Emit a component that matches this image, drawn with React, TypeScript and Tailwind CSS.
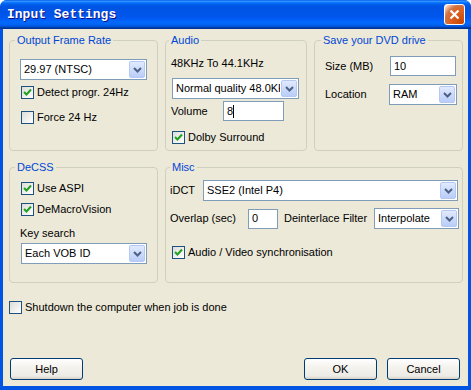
import React from 'react';

const Check: React.FC<{ checked?: boolean }> = ({ checked }) => (
  <span className="w-[13px] h-[13px] shrink-0 border border-[#1c5180] bg-[linear-gradient(135deg,#dcdcd7,#ffffff)] flex items-center justify-center">
    {checked && (
      <svg width="11" height="11" viewBox="0 0 11 11">
        <path d="M2 5 L4.5 7.5 L9 2.5" stroke="#21a121" strokeWidth="2" fill="none" />
      </svg>
    )}
  </span>
);

const CheckRow: React.FC<{ checked?: boolean; label: string; className?: string }> = ({ checked, label, className = '' }) => (
  <div className={`flex items-center gap-[3px] h-[13px] ${className}`}>
    <Check checked={checked} />
    <span className="leading-[13px] whitespace-nowrap">{label}</span>
  </div>
);

const Combo: React.FC<{ value: string; className?: string }> = ({ value, className = '' }) => (
  <div className={`h-[21px] flex items-center border border-[#7f9db9] bg-white ${className}`}>
    <span className="flex-1 pl-[3px] overflow-hidden whitespace-nowrap leading-[13px]">{value}</span>
    <span className="w-[16px] h-[17px] m-px shrink-0 rounded-[2px] border border-[#b5c8f4] bg-[linear-gradient(180deg,#e1eafe,#b9cdf8)] flex items-center justify-center">
      <svg width="9" height="6" viewBox="0 0 9 6">
        <path d="M1 1 L4.5 4.5 L8 1" stroke="#4d6185" strokeWidth="2" fill="none" />
      </svg>
    </span>
  </div>
);

const Edit: React.FC<{ value: string; caret?: boolean; className?: string }> = ({ value, caret, className = '' }) => (
  <div className={`h-[20px] flex items-center border border-[#7f9db9] bg-white pl-[3px] ${className}`}>
    <span className="leading-[13px]">{value}</span>
    {caret && <span className="w-px h-[13px] bg-black" />}
  </div>
);

const Group: React.FC<{ title: string; offset: string; className?: string; children: React.ReactNode }> = ({ title, offset, className = '', children }) => (
  <fieldset className={`border border-[#d0d0bf] rounded-[4px] p-0 m-0 min-w-0 ${className}`}>
    <legend className={`px-[2px] leading-[13px] text-[#0046d5] ${offset}`}>{title}</legend>
    {children}
  </fieldset>
);

const XpButton: React.FC<{ label: string }> = ({ label }) => (
  <button className="w-[73px] h-[22px] rounded-[3px] border border-[#003c74] bg-[linear-gradient(180deg,#ffffff_0%,#f4f3ee_40%,#ecebe6_85%,#d6d0c5_100%)] text-[11px] leading-[13px] text-black">
    {label}
  </button>
);

export default function App() {
  return (
    <div className="w-[471px] h-[390px] flex flex-col bg-[#0054e3] rounded-t-[7px] overflow-hidden font-['Liberation_Sans',Arial,sans-serif] text-[11px] text-black">
      {/* title bar */}
      <div className="h-[29px] shrink-0 flex items-center pl-[7px] pr-[6px] bg-[linear-gradient(180deg,#0058ee_0%,#3593ff_4%,#288eff_6%,#127dff_8%,#036ffc_10%,#0262ee_14%,#0057e5_20%,#0054e3_24%,#0055eb_56%,#005bf5_66%,#026afe_76%,#0062ef_86%,#0052d6_92%,#0040ab_94%,#003092_100%)]">
        <span className="flex-1 font-['Liberation_Mono',monospace] font-bold text-[13px] text-white [text-shadow:1px_1px_#0f1089]">
          Input Settings
        </span>
        <span className="w-[21px] h-[21px] rounded-[3px] border border-white bg-[radial-gradient(circle_at_90%_90%,#cc4600_0%,#dc6527_55%,#cd7546_70%,#ffccb2_90%,#ffffff_100%)] flex items-center justify-center">
          <svg width="11" height="11" viewBox="0 0 11 11">
            <path d="M1.5 1.5 L9.5 9.5 M9.5 1.5 L1.5 9.5" stroke="#fff" strokeWidth="2.2" />
          </svg>
        </span>
      </div>

      {/* client area */}
      <div className="flex-1 mx-[3px] mb-[4px] bg-[#ece9d8] flex flex-col pl-[6px] pr-[5px] pt-[5px] pb-[6px]">
        <div className="flex gap-[7px] h-[117px]">
          <Group title="Output Frame Rate" offset="ml-[5px]" className="w-[149px]">
            <div className="px-[10px] pt-[12px]">
              <Combo value="29.97 (NTSC)" />
              <CheckRow checked label="Detect progr. 24Hz" className="mt-[6px] ml-px" />
              <CheckRow label="Force 24 Hz" className="mt-[12px] ml-px" />
            </div>
          </Group>

          <Group title="Audio" offset="ml-[3px]" className="w-[142px]">
            <div className="pl-[5px] pt-[10px]">
              <div className="leading-[13px]">48KHz To 44.1KHz</div>
              <Combo value="Normal quality 48.0KHz" className="mt-[8px] ml-px w-[127px]" />
              <div className="mt-[2px] flex items-center h-[20px]">
                <span className="w-[52px]">Volume</span>
                <Edit value="8" caret className="w-[61px]" />
              </div>
              <CheckRow checked label="Dolby Surround" className="mt-[10px] ml-px" />
            </div>
          </Group>

          <Group title="Save your DVD drive" offset="ml-[6px]" className="w-[149px]">
            <div className="pl-[10px] pt-[9px]">
              <div className="flex items-center h-[20px]">
                <span className="w-[65px]">Size (MB)</span>
                <Edit value="10" className="w-[66px]" />
              </div>
              <div className="mt-[8px] flex items-center h-[21px]">
                <span className="w-[64px]">Location</span>
                <Combo value="RAM" className="w-[68px]" />
              </div>
            </div>
          </Group>
        </div>

        <div className="flex gap-[7px] h-[122px] mt-[10px]">
          <Group title="DeCSS" offset="ml-[5px]" className="w-[149px]">
            <div className="px-[10px] pt-[8px]">
              <CheckRow checked label="Use ASPI" className="ml-px" />
              <CheckRow checked label="DeMacroVision" className="mt-[8px] ml-px" />
              <div className="mt-[11px] leading-[13px]">Key search</div>
              <Combo value="Each VOB ID" className="mt-[3px] ml-px w-[126px]" />
            </div>
          </Group>

          <Group title="Misc" offset="ml-[4px]" className="w-[298px]">
            <div className="pl-[4px] pt-[6px]">
              <div className="flex items-center h-[21px]">
                <span className="w-[33px]">iDCT</span>
                <Combo value="SSE2 (Intel P4)" className="w-[255px]" />
              </div>
              <div className="mt-[7px] flex items-center h-[21px]">
                <span className="w-[78px]">Overlap (sec)</span>
                <Edit value="0" className="w-[30px]" />
                <span className="ml-[6px] w-[90px]">Deinterlace Filter</span>
                <Combo value="Interpolate" className="w-[85px]" />
              </div>
              <CheckRow checked label="Audio / Video synchronisation" className="mt-[17px] ml-[2px]" />
            </div>
          </Group>
        </div>

        <CheckRow label="Shutdown the computer when job is done" className="mt-[18px]" />

        <div className="mt-auto flex items-center pl-px pr-[3px]">
          <XpButton label="Help" />
          <div className="flex-1" />
          <XpButton label="OK" />
          <div className="w-[10px]" />
          <XpButton label="Cancel" />
        </div>
      </div>
    </div>
  );
}
